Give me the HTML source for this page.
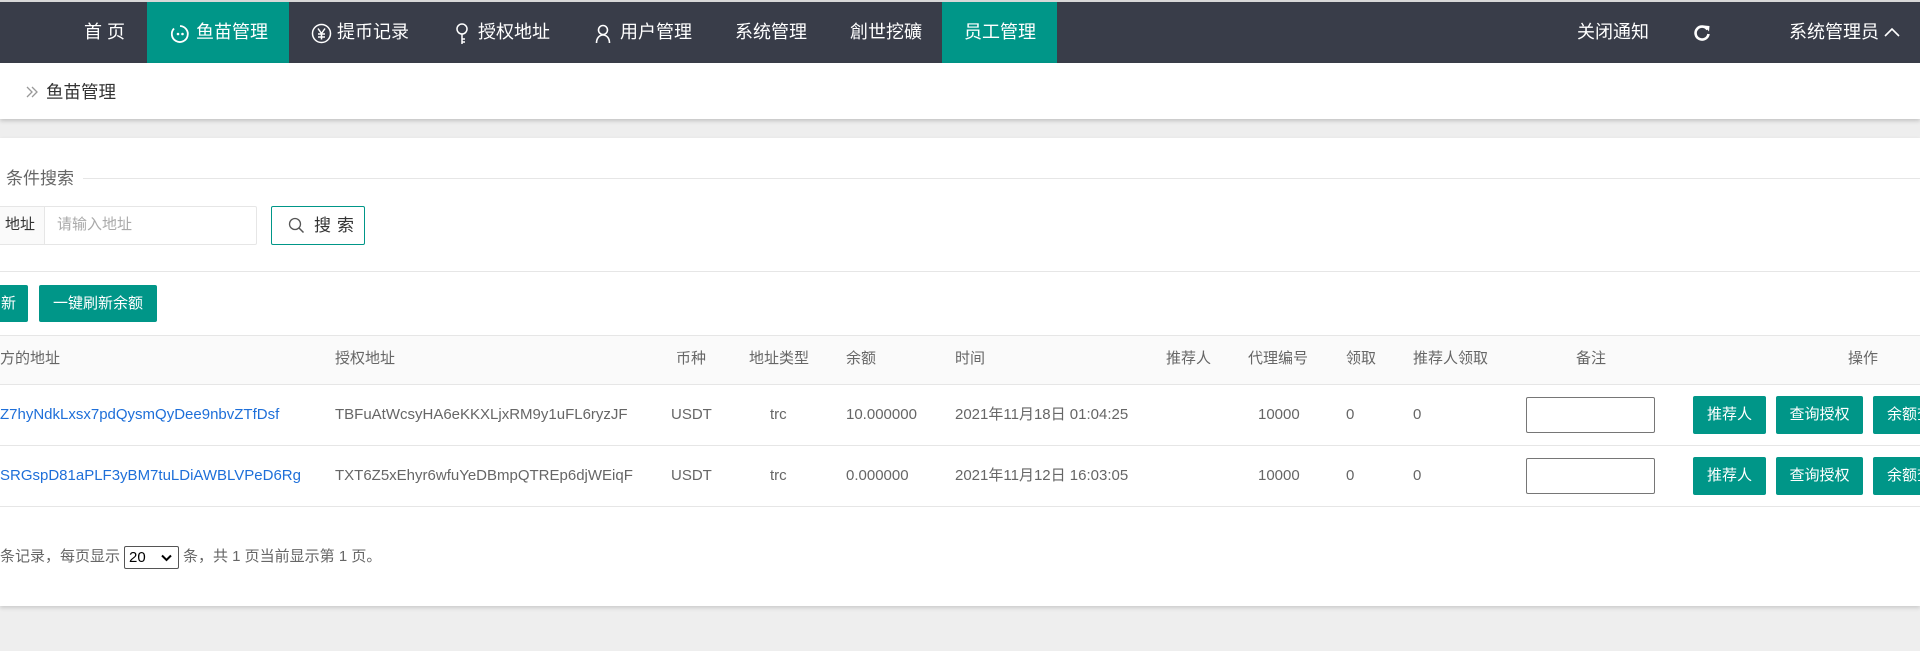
<!DOCTYPE html>
<html><head><meta charset="utf-8"><style>
*{margin:0;padding:0;box-sizing:border-box}
body{width:1920px;height:651px;overflow:hidden;background:#eeeeee;font-family:"Liberation Sans","Noto Sans CJK SC",sans-serif;position:relative;color:#666}
.a{position:absolute;white-space:nowrap}
.nav{position:absolute;left:0;top:0;width:1920px;height:63px;background:#393d49;border-top:2px solid #d8d8d8}
.nv{position:absolute;top:0;height:61px;line-height:61px;color:#fff;font-size:18px}
.act{background:#009688}
.crumb{position:absolute;left:0;top:63px;width:1920px;height:56px;background:#fff;box-shadow:0 2px 4px rgba(0,0,0,.18)}
.card{position:absolute;left:0;top:138px;width:1920px;height:468px;background:#fff;box-shadow:0 2px 4px rgba(0,0,0,.15)}
.t{font-size:15px;color:#666;line-height:20px}
.btn{position:absolute;background:#009688;color:#fff;font-size:15px;text-align:center;border-radius:2px}
.line{position:absolute;left:0;width:1920px;height:1px;background:#e6e6e6}
.inp{position:absolute;width:129px;height:36px;border:1px solid #767676;border-radius:2px;background:#fff}
.blue{color:#1e6fd9}
</style></head><body>
<div class="nav">
  <div class="nv" style="left:84px">首 页</div>
  <div class="nv act" style="left:147px;width:142px"></div>
  <svg class="a" style="left:170px;top:22px" width="20" height="20" viewBox="0 0 20 20"><path d="M4 4.5A8 8 0 1 0 10 2" fill="none" stroke="#fff" stroke-width="1.8"/><circle cx="8" cy="10" r="1.3" fill="#fff"/><circle cx="12.5" cy="10" r="1.3" fill="#fff"/></svg>
  <div class="nv" style="left:196px">鱼苗管理</div>
  <svg class="a" style="left:311px;top:21px" width="21" height="21" viewBox="0 0 21 21"><circle cx="10.5" cy="10.5" r="9" fill="none" stroke="#fff" stroke-width="1.5"/><path d="M7 5.5l3.5 5 3.5-5M10.5 10.5v6M7 11h7M7 14h7" fill="none" stroke="#fff" stroke-width="1.5"/></svg>
  <div class="nv" style="left:337px">提币记录</div>
  <svg class="a" style="left:455px;top:21px" width="14" height="22" viewBox="0 0 14 22"><circle cx="7" cy="6" r="5" fill="none" stroke="#fff" stroke-width="1.5"/><path d="M7 11v10M7 16h3M7 19h3" fill="none" stroke="#fff" stroke-width="1.5"/></svg>
  <div class="nv" style="left:478px">授权地址</div>
  <svg class="a" style="left:595px;top:22px" width="16" height="20" viewBox="0 0 16 20"><circle cx="8" cy="6" r="4.5" fill="none" stroke="#fff" stroke-width="1.6"/><path d="M1.5 19c0-5 3-8 6.5-8s6.5 3 6.5 8" fill="none" stroke="#fff" stroke-width="1.6"/></svg>
  <div class="nv" style="left:620px">用户管理</div>
  <div class="nv" style="left:735px">系统管理</div>
  <div class="nv" style="left:850px">創世挖礦</div>
  <div class="nv act" style="left:942px;width:115px"></div>
  <div class="nv" style="left:964px">员工管理</div>
  <div class="nv" style="left:1577px">关闭通知</div>
  <svg class="a" style="left:1693px;top:22px" width="18" height="18" viewBox="0 0 18 18"><path d="M14.5 5.5A6.5 6.5 0 1 0 15.5 10" fill="none" stroke="#fff" stroke-width="2.6"/><path d="M11 1.5l5.5 0.5-0.5 5.5z" fill="#fff"/></svg>
  <div class="nv" style="left:1789px">系统管理员</div>
  <svg class="a" style="left:1884px;top:25px" width="16" height="10" viewBox="0 0 16 10"><path d="M1 9l7-7 7 7" fill="none" stroke="#fff" stroke-width="1.6"/></svg>
</div>
<div class="crumb">
  <svg class="a" style="left:26px;top:23px" width="12" height="12" viewBox="0 0 12 12"><path d="M1 1l5 5-5 5M6 1l5 5-5 5" fill="none" stroke="#999" stroke-width="1.3"/></svg>
  <div class="a" style="left:46px;top:17px;font-size:17.5px;color:#333;line-height:24px">鱼苗管理</div>
</div>
<div class="card">
  <div class="a" style="left:6px;top:30px;font-size:17px;color:#666;line-height:22px">条件搜索</div>
  <div class="a" style="left:83px;top:40px;width:1837px;height:1px;background:#e6e6e6"></div>
  <div class="a" style="left:-2px;top:68px;width:259px;height:39px;border:1px solid #e6e6e6;border-radius:2px;background:#fff"></div>
  <div class="a" style="left:0;top:69px;width:45px;height:37px;background:#fafafa;border-right:1px solid #e6e6e6"></div>
  <div class="a" style="left:5px;top:77px;font-size:15px;color:#333;line-height:20px">地址</div>
  <div class="a" style="left:57px;top:77px;font-size:15px;color:#aaa;line-height:20px">请输入地址</div>
  <div class="a" style="left:271px;top:68px;width:94px;height:39px;border:1px solid #009688;border-radius:2px;background:#fff"></div>
  <svg class="a" style="left:288px;top:79px" width="17" height="17" viewBox="0 0 17 17"><circle cx="7" cy="7" r="5.5" fill="none" stroke="#555" stroke-width="1.3"/><path d="M11 11l4.5 4.5" stroke="#555" stroke-width="1.5"/></svg>
  <div class="a" style="left:314px;top:77px;font-size:17px;color:#333;line-height:22px;letter-spacing:6px">搜索</div>
  <div class="line" style="top:133px"></div>
  <div class="btn" style="left:-40px;top:147px;width:68px;height:37px;line-height:37px;text-align:right;padding-right:12px">刷新</div>
  <div class="btn" style="left:39px;top:147px;width:118px;height:37px;line-height:37px">一键刷新余额</div>
  <div class="a" style="left:0;top:197px;width:1920px;height:50px;background:#fafafa;border-top:1px solid #e6e6e6"></div>
  <div class="line" style="top:246px"></div>
  <div class="line" style="top:307px"></div>
  <div class="line" style="top:368px"></div>
</div>
<!-- header texts (absolute page coords) -->
<div class="a t" style="left:0;top:349px">方的地址</div>
<div class="a t" style="left:335px;top:349px">授权地址</div>
<div class="a t" style="left:676px;top:349px">币种</div>
<div class="a t" style="left:749px;top:349px">地址类型</div>
<div class="a t" style="left:846px;top:349px">余额</div>
<div class="a t" style="left:955px;top:349px">时间</div>
<div class="a t" style="left:1166px;top:349px">推荐人</div>
<div class="a t" style="left:1248px;top:349px">代理编号</div>
<div class="a t" style="left:1346px;top:349px">领取</div>
<div class="a t" style="left:1413px;top:349px">推荐人领取</div>
<div class="a t" style="left:1576px;top:349px">备注</div>
<div class="a t" style="left:1848px;top:349px">操作</div>
<!-- row1 -->
<div class="a t blue" style="left:0;top:405px">Z7hyNdkLxsx7pdQysmQyDee9nbvZTfDsf</div>
<div class="a t" style="left:335px;top:405px">TBFuAtWcsyHA6eKKXLjxRM9y1uFL6ryzJF</div>
<div class="a t" style="left:671px;top:405px">USDT</div>
<div class="a t" style="left:770px;top:405px">trc</div>
<div class="a t" style="left:846px;top:405px">10.000000</div>
<div class="a t" style="left:955px;top:405px">2021年11月18日 01:04:25</div>
<div class="a t" style="left:1258px;top:405px">10000</div>
<div class="a t" style="left:1346px;top:405px">0</div>
<div class="a t" style="left:1413px;top:405px">0</div>
<div class="inp" style="left:1526px;top:397px"></div>
<div class="btn" style="left:1693px;top:396px;width:73px;height:38px;line-height:38px">推荐人</div>
<div class="btn" style="left:1776px;top:396px;width:87px;height:38px;line-height:38px">查询授权</div>
<div class="btn" style="left:1873px;top:396px;width:87px;height:38px;line-height:38px;text-align:left;padding-left:14px">余额查询</div>
<!-- row2 -->
<div class="a t blue" style="left:0;top:466px">SRGspD81aPLF3yBM7tuLDiAWBLVPeD6Rg</div>
<div class="a t" style="left:335px;top:466px">TXT6Z5xEhyr6wfuYeDBmpQTREp6djWEiqF</div>
<div class="a t" style="left:671px;top:466px">USDT</div>
<div class="a t" style="left:770px;top:466px">trc</div>
<div class="a t" style="left:846px;top:466px">0.000000</div>
<div class="a t" style="left:955px;top:466px">2021年11月12日 16:03:05</div>
<div class="a t" style="left:1258px;top:466px">10000</div>
<div class="a t" style="left:1346px;top:466px">0</div>
<div class="a t" style="left:1413px;top:466px">0</div>
<div class="inp" style="left:1526px;top:458px"></div>
<div class="btn" style="left:1693px;top:457px;width:73px;height:38px;line-height:38px">推荐人</div>
<div class="btn" style="left:1776px;top:457px;width:87px;height:38px;line-height:38px">查询授权</div>
<div class="btn" style="left:1873px;top:457px;width:87px;height:38px;line-height:38px;text-align:left;padding-left:14px">余额查询</div>
<!-- pagination -->
<div class="a t" style="left:0;top:547px">条记录，每页显示</div>
<div class="a" style="left:124px;top:546px;width:55px;height:23px;border:1px solid #555;border-radius:2px;background:#fff;font-size:15px;color:#000;line-height:21px;padding-left:4px">20<svg style="position:absolute;left:36px;top:7px" width="11" height="8" viewBox="0 0 11 8"><path d="M1 1.5l4.5 4.5 4.5-4.5" fill="none" stroke="#000" stroke-width="2"/></svg></div>
<div class="a t" style="left:183px;top:547px">条，共 1 页当前显示第 1 页。</div>
</body></html>
